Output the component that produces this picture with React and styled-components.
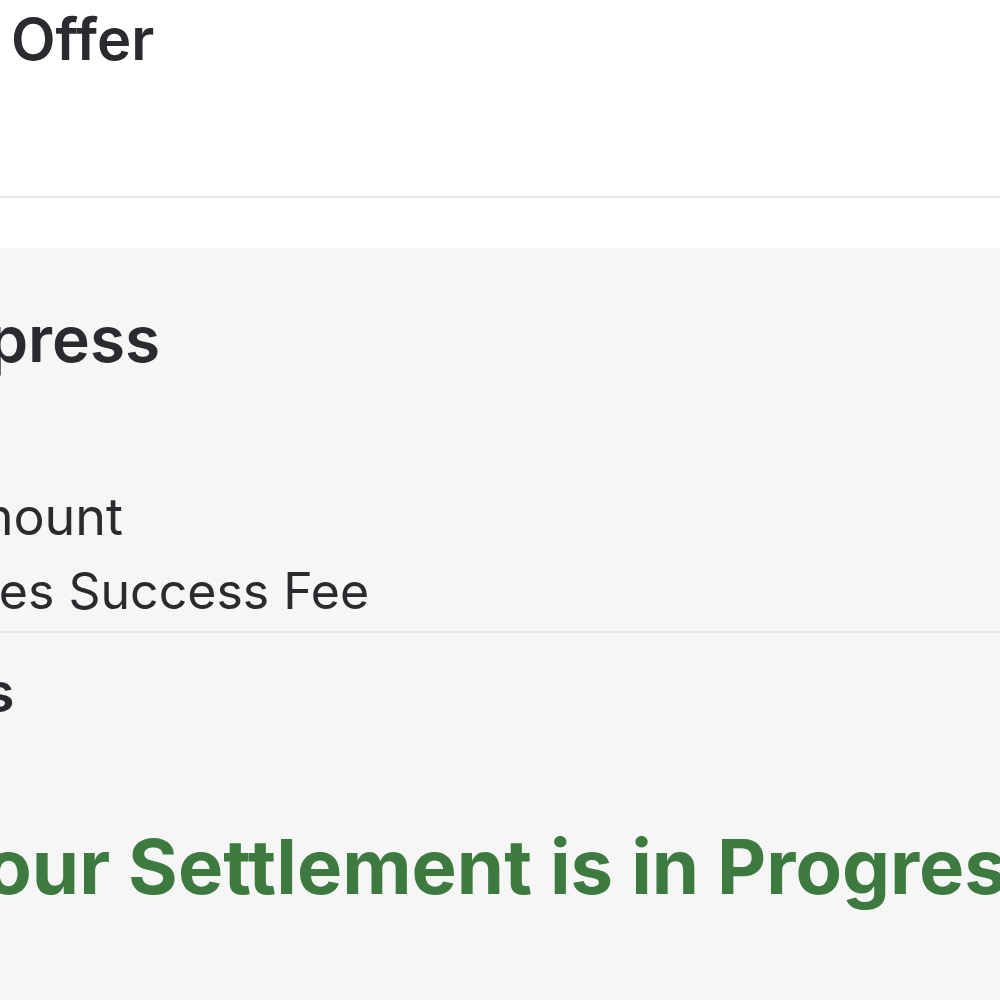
import styled, { createGlobalStyle } from 'styled-components';

const GlobalStyle = createGlobalStyle`
  html, body {
    margin: 0;
    padding: 0;
    background: #ffffff;
  }
  body {
    font-family: Inter, "Noto Sans", "Liberation Sans", sans-serif;
    color: #2b2b2f;
  }
`;

export default function App() {
  return (
    <>
      <GlobalStyle />
      <Page>
        <Header>
          <Title>Offer</Title>
        </Header>
        <Gap />
        <Panel>
          <Heading shift={-87} size={64}>Express</Heading>
          <Detail shift={-68} top={104}>Amount</Detail>
          <Detail shift={-84} size={50}>Taxes Success Fee</Detail>
          <Divider />
          <Heading shift={-156} top={24} size={55} lh={70}>Status</Heading>
          <Banner shift={-62}>Your Settlement is in Progress</Banner>
        </Panel>
      </Page>
    </>
  );
}

const Page = styled.div`
  width: 1000px;
  height: 1000px;
  overflow: hidden;
  display: flex;
  flex-direction: column;
`;

const Header = styled.header`
  height: 198px;
  padding: 3px 0 0 11px;
  box-sizing: border-box;
  border-bottom: 2px solid #e4e4e4;
`;

const Title = styled.h1`
  margin: 0;
  font-size: 58px;
  line-height: 72px;
  font-weight: 600;
  white-space: nowrap;
`;

const Gap = styled.div`
  height: 50px;
  background: #ffffff;
`;

const Panel = styled.section`
  flex: 1;
  background: #f6f6f6;
  padding-top: 54px;
  display: flex;
  flex-direction: column;
`;

const Heading = styled.h2`
  margin: ${(p) => p.top || 0}px 0 0 ${(p) => p.shift}px;
  font-size: ${(p) => p.size}px;
  line-height: ${(p) => p.lh || 74}px;
  font-weight: 600;
  white-space: nowrap;
`;

const Detail = styled.div`
  margin: ${(p) => p.top || 0}px 0 0 ${(p) => p.shift}px;
  font-size: ${(p) => p.size || 52}px;
  line-height: 74px;
  font-weight: 400;
  white-space: nowrap;
`;

const Divider = styled.hr`
  margin: 3px 0 0;
  border: none;
  border-top: 2px solid #e8e8e8;
`;

const Banner = styled.div`
  margin: 94px 0 0 ${(p) => p.shift}px;
  font-size: 76px;
  line-height: 90px;
  font-weight: 700;
  color: #3d7a3f;
  white-space: nowrap;
`;
